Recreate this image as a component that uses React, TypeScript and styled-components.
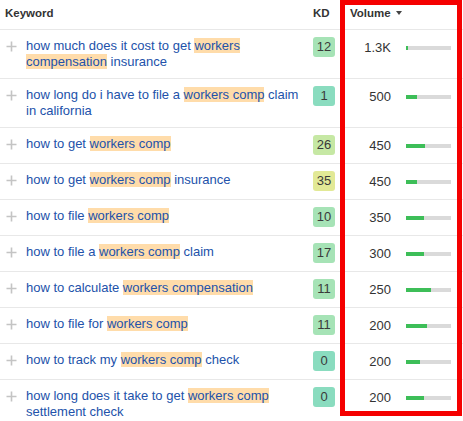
import React from "react";
import styled, { createGlobalStyle } from "styled-components";

const Global = createGlobalStyle`
  html, body { margin: 0; padding: 0; background: #fff; }
  body { font-family: "Liberation Sans", Arial, Helvetica, sans-serif; color: #333; }
`;

const Wrap = styled.div`
  position: relative;
  width: 463px;
  height: 421px;
  overflow: hidden;
`;

const RowGrid = styled.div`
  display: grid;
  grid-template-columns: 305px 35px 123px;
  border-bottom: 1px solid #e8e8e8;
`;

const HeadRow = styled(RowGrid)`
  height: 29px;
  align-items: center;
`;

const HeadCell = styled.div<{ $pl: number }>`
  padding-left: ${(p) => p.$pl}px;
  font-size: 11.5px;
  font-weight: bold;
  color: #333;
  line-height: 14px;
  display: flex;
  align-items: center;
  gap: 5px;
  margin-top: -3px;
`;

const Row = styled(RowGrid)`
  padding: 7px 0 8px;
  align-items: start;
`;

const KeywordCell = styled.div`
  display: flex;
  align-items: flex-start;
  padding-left: 6px;
  gap: 9px;
`;

const PlusIcon = styled.svg`
  flex: none;
  margin-top: 4px;
`;

const KeywordText = styled.a`
  font-size: 13px;
  line-height: 16px;
  color: #2252aa;
  text-decoration: none;
  padding-top: 1px;
`;

const Mark = styled.span`
  background: #ffdcaa;
`;

const KdCell = styled.div`
  padding-left: 8px;
`;

const Badge = styled.div<{ $bg: string }>`
  width: 22px;
  height: 20px;
  border-radius: 3px;
  background: ${(p) => p.$bg};
  color: #3a3a3a;
  font-size: 13px;
  line-height: 20px;
  text-align: center;
`;

const VolCell = styled.div`
  display: flex;
  align-items: center;
  height: 20px;
  gap: 15px;
`;

const VolNum = styled.div`
  width: 51px;
  text-align: right;
  font-size: 13px;
  color: #333;
`;

const Bar = styled.div`
  width: 45px;
  height: 4px;
  background: #dadada;
  margin-top: 1px;
  display: flex;
`;

const BarFill = styled.div`
  height: 100%;
  background: #3dbe58;
`;

const Highlight = styled.div`
  position: absolute;
  left: 340px;
  top: 0;
  width: 122px;
  height: 416px;
  border: 5px solid #f50000;
  box-sizing: border-box;
  pointer-events: none;
`;

type Item = { parts: (string | [string])[]; kd: number; kdColor: string; vol: string; bar: number };

const G1 = "#a6e3b6";
const T1 = "#8adcbf";
const G2 = "#c6e8a4";
const Y1 = "#e2e996";

const rows: Item[] = [
  { parts: ["how much does it cost to get ", ["workers compensation"], " insurance"], kd: 12, kdColor: G1, vol: "1.3K", bar: 2 },
  { parts: ["how long do i have to file a ", ["workers comp"], " claim in california"], kd: 1, kdColor: T1, vol: "500", bar: 11 },
  { parts: ["how to get ", ["workers comp"]], kd: 26, kdColor: G2, vol: "450", bar: 19 },
  { parts: ["how to get ", ["workers comp"], " insurance"], kd: 35, kdColor: Y1, vol: "450", bar: 11 },
  { parts: ["how to file ", ["workers comp"]], kd: 10, kdColor: G1, vol: "350", bar: 18 },
  { parts: ["how to file a ", ["workers comp"], " claim"], kd: 17, kdColor: G1, vol: "300", bar: 18 },
  { parts: ["how to calculate ", ["workers compensation"]], kd: 11, kdColor: G1, vol: "250", bar: 25 },
  { parts: ["how to file for ", ["workers comp"]], kd: 11, kdColor: G1, vol: "200", bar: 21 },
  { parts: ["how to track my ", ["workers comp"], " check"], kd: 0, kdColor: T1, vol: "200", bar: 14 },
  { parts: ["how long does it take to get ", ["workers comp"], " settlement check"], kd: 0, kdColor: T1, vol: "200", bar: 18 },
];

const Plus = () => (
  <PlusIcon width="11" height="11" viewBox="0 0 11 11">
    <path d="M5.5 0.5v10M0.5 5.5h10" stroke="#c4c4c4" strokeWidth="1.6" fill="none" />
  </PlusIcon>
);

const Caret = () => (
  <svg width="6" height="4" viewBox="0 0 6 4">
    <path d="M0 0h6L3 4z" fill="#444" />
  </svg>
);

export default function App() {
  return (
    <>
      <Global />
      <Wrap>
        <HeadRow>
          <HeadCell $pl={5}>Keyword</HeadCell>
          <HeadCell $pl={8}>KD</HeadCell>
          <HeadCell $pl={10}>
            Volume <Caret />
          </HeadCell>
        </HeadRow>
        {rows.map((r, i) => (
          <Row key={i}>
            <KeywordCell>
              <Plus />
              <KeywordText href="#">
                {r.parts.map((p, j) =>
                  typeof p === "string" ? <React.Fragment key={j}>{p}</React.Fragment> : <Mark key={j}>{p[0]}</Mark>
                )}
              </KeywordText>
            </KeywordCell>
            <KdCell>
              <Badge $bg={r.kdColor}>{r.kd}</Badge>
            </KdCell>
            <VolCell>
              <VolNum>{r.vol}</VolNum>
              <Bar>
                <BarFill style={{ width: `${r.bar}px` }} />
              </Bar>
            </VolCell>
          </Row>
        ))}
        <Highlight />
      </Wrap>
    </>
  );
}
